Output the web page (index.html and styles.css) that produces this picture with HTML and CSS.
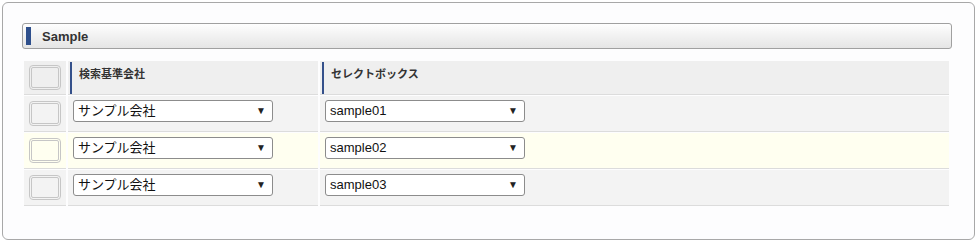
FILE: index.html
```html
<!DOCTYPE html>
<html>
<head lang="ja">
	<meta charset="UTF-8">
	<title>Sample</title>
	<link rel="stylesheet" href="styles.css">
</head>
<body>
<div class="panel">
	<div class="title_bar">
		<span class="mark"></span>
		<h2>Sample</h2>
	</div>
	<table class="grid">
		<tr class="head">
			<td class="num"><span class="chk"></span></td>
			<td class="col_a"><div class="label">検索基準会社</div></td>
			<td class="col_b"><div class="label">セレクトボックス</div></td>
		</tr>
		<tr>
			<td class="num"><span class="chk"></span></td>
			<td class="col_a"><div class="sel">サンプル会社</div></td>
			<td class="col_b"><div class="sel">sample01</div></td>
		</tr>
		<tr class="hover">
			<td class="num"><span class="chk"></span></td>
			<td class="col_a"><div class="sel">サンプル会社</div></td>
			<td class="col_b"><div class="sel">sample02</div></td>
		</tr>
		<tr>
			<td class="num"><span class="chk"></span></td>
			<td class="col_a"><div class="sel">サンプル会社</div></td>
			<td class="col_b"><div class="sel">sample03</div></td>
		</tr>
	</table>
</div>
</body>
</html>
```

FILE: styles.css
```css
*{
	margin:0;
	padding:0;
	box-sizing:border-box;
}
body{
	margin:2px;
	background:#fff;
	font-family:"Liberation Sans", "Noto Sans CJK JP", sans-serif;
	color:#333;
}
.panel{
	width:973px;
	height:238px;
	border:1px solid #a8a8a8;
	border-radius:6px;
	background:#fdfdfe;
	padding:20px 0 0 19px;
}
.title_bar{
	display:flex;
	align-items:center;
	width:930px;
	height:26px;
	border:1px solid #a0a0a0;
	border-radius:3px;
	background:linear-gradient(#fefefe 0%, #e5e5e5 100%);
	padding-left:3px;
}
.title_bar .mark{
	width:5px;
	height:18px;
	background:#2e4f8c;
}
.title_bar h2{
	font-size:13px;
	font-weight:bold;
	margin-left:11px;
	color:#333;
}
.grid{
	border-collapse:separate;
	border-spacing:2px 1px;
	margin:11px 0 0 0;
	width:929px;
	table-layout:fixed;
}
.grid td{
	background:#f3f3f3;
	border-bottom:1px solid #dcdcdc;
	height:36px;
	vertical-align:top;
	padding:4px 5px 0;
}
.grid .head td{
	background:#efefef;
	height:34px;
	padding-top:1px;
}
.grid .hover td{
	background:#fffff0;
}
.grid td.num{
	width:42px;
	padding:0 0 0 5px;
	vertical-align:middle;
}
.grid td.col_a{
	width:250px;
}
.chk{
	display:block;
	width:32px;
	height:25px;
	border:3px double #c6c6c6;
	border-radius:4px;
}
.label{
	height:32px;
	margin-left:-3px;
	border-left:2px solid #34508a;
	padding:3px 0 0 7px;
	font-size:11px;
	font-weight:bold;
	color:#333;
}
.sel{
	position:relative;
	width:200px;
	height:22px;
	border:1px solid #8c8c8c;
	border-radius:3px;
	background:#fff;
	font-size:13px;
	line-height:20px;
	padding-left:4px;
	color:#111;
}
.sel:after{
	content:"▼";
	position:absolute;
	right:6px;
	top:0;
	font-size:10px;
	color:#222;
}
```
